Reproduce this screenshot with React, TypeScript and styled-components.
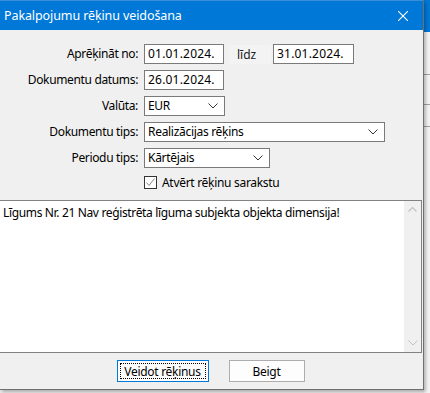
import styled, { createGlobalStyle } from "styled-components";

// global page styles
const GlobalStyle = createGlobalStyle`
  html, body {
    margin: 0;
    padding: 0;
    background: #e9e9e9;
  }
  body {
    font-family: "Noto Sans", "Open Sans", sans-serif;
    font-size: 12px;
    color: #000;
  }
`;

// desktop + window frame
const Desktop = styled.div`
  width: 430px;
  height: 393px;
  display: flex;
  overflow: hidden;
  background: #e9e9e9;
`;

const Window = styled.div`
  width: 424px;
  height: 390px;
  flex-shrink: 0;
  box-sizing: border-box;
  display: flex;
  flex-direction: column;
  background: #f0f0f0;
  border-right: 1px solid #6e6e6e;
  border-bottom: 1px solid #6e6e6e;
  box-shadow: 2px 2px 3px rgba(0, 0, 0, 0.25);
  position: relative;
  z-index: 1;
`;

const BackStrip = styled.div`
  flex: 1;
  display: flex;
  flex-direction: column;
  background: #f3f3f3;
`;

const BackTitle = styled.div`
  height: 32px;
  background: #0078d7;
`;

const BackLine = styled.div<{ $top: number }>`
  margin-top: ${(p) => p.$top}px;
  height: 1px;
  background: #a0a0a0;
`;

const TitleBar = styled.div`
  height: 30px;
  flex-shrink: 0;
  display: flex;
  align-items: center;
  justify-content: space-between;
  background: #0078d7;
  color: #fff;
  border-top: 1px solid #3b8fd8;
  box-sizing: border-box;
`;

const Title = styled.span`
  padding-left: 4px;
  font-size: 12.5px;
  letter-spacing: -0.1px;
`;

const CloseButton = styled.div`
  width: 40px;
  height: 29px;
  display: flex;
  align-items: center;
  justify-content: center;
`;

// form
const Form = styled.div`
  display: grid;
  grid-template-columns: 138px 1fr;
  column-gap: 6px;
  row-gap: 6px;
  padding-top: 14px;
`;

const Label = styled.div`
  text-align: right;
  height: 20px;
  line-height: 20px;
  letter-spacing: -0.35px;
  white-space: nowrap;
`;

const Row = styled.div`
  display: flex;
  align-items: center;
  height: 20px;
`;

const TextInput = styled.div<{ $width: number }>`
  width: ${(p) => p.$width}px;
  height: 20px;
  box-sizing: border-box;
  border: 1px solid #7a7a7a;
  background: #fff;
  padding-left: 3px;
  line-height: 18px;
  letter-spacing: 0.2px;
`;

const Select = styled(TextInput)`
  display: flex;
  align-items: center;
  justify-content: space-between;
  padding-right: 6px;
  letter-spacing: -0.3px;
`;

const InlineLabel = styled.div`
  margin-left: 5px;
  margin-right: 2px;
  width: 42px;
  height: 19px;
  line-height: 19px;
  padding-left: 8px;
  box-sizing: border-box;
  background: #f3f3f4;
  color: #222;
`;

const CheckRow = styled.div`
  grid-column: 2;
  display: flex;
  align-items: center;
  gap: 5px;
  margin-top: 2px;
  height: 13px;
  letter-spacing: -0.3px;
`;

const CheckBox = styled.div`
  width: 13px;
  height: 13px;
  box-sizing: border-box;
  border: 1px solid #333;
  background: #fff;
  display: flex;
  align-items: center;
  justify-content: center;
`;

// message area
const Messages = styled.div`
  margin-top: 11px;
  width: 422px;
  height: 153px;
  flex-shrink: 0;
  box-sizing: border-box;
  border: 1px solid #828282;
  border-left: none;
  background: #fff;
  display: flex;
`;

const MessageText = styled.div`
  flex: 1;
  padding: 3px 0 0 3px;
  letter-spacing: -0.35px;
`;

const ScrollBar = styled.div`
  width: 17px;
  background: #f0f0f0;
  display: flex;
  flex-direction: column;
  justify-content: space-between;
  align-items: center;
  padding: 6px 0;
`;

// buttons
const ButtonBar = styled.div`
  flex: 1;
  display: flex;
  justify-content: center;
  gap: 20px;
  padding-top: 7px;
  padding-right: 2px;
`;

const Button = styled.div<{ $width: number; $focused?: boolean }>`
  width: ${(p) => p.$width}px;
  height: 22px;
  box-sizing: border-box;
  border: 1px solid ${(p) => (p.$focused ? "#0078d7" : "#adadad")};
  background: #fdfdfd;
  display: flex;
  padding: 2px;
  letter-spacing: -0.3px;
`;

const ButtonInner = styled.div<{ $focused?: boolean }>`
  flex: 1;
  display: flex;
  align-items: center;
  justify-content: center;
  border: 1px dotted ${(p) => (p.$focused ? "#000" : "transparent")};
`;

const Chevron = ({ color = "#333" }: { color?: string }) => (
  <svg width="10" height="6" viewBox="0 0 10 6">
    <path d="M0.5 0.5 L5 5 L9.5 0.5" fill="none" stroke={color} strokeWidth="1" />
  </svg>
);

const UpChevron = () => (
  <svg width="9" height="5" viewBox="0 0 9 5">
    <path d="M0.5 4.5 L4.5 0.5 L8.5 4.5" fill="none" stroke="#c2c2c2" strokeWidth="1.2" />
  </svg>
);

export default function App() {
  return (
    <>
      <GlobalStyle />
      <Desktop>
        <Window>
          <TitleBar>
            <Title>Pakalpojumu rēķinu veidošana</Title>
            <CloseButton>
              <svg width="10" height="10" viewBox="0 0 10 10">
                <path d="M0 0 L10 10 M10 0 L0 10" stroke="#fff" strokeWidth="1.1" />
              </svg>
            </CloseButton>
          </TitleBar>

          <Form>
            <Label>Aprēķināt no:</Label>
            <Row>
              <TextInput $width={80}>01.01.2024.</TextInput>
              <InlineLabel>līdz</InlineLabel>
              <TextInput $width={81}>31.01.2024.</TextInput>
            </Row>

            <Label>Dokumentu datums:</Label>
            <Row>
              <TextInput $width={80}>26.01.2024.</TextInput>
            </Row>

            <Label>Valūta:</Label>
            <Row>
              <Select $width={81}>
                EUR
                <Chevron />
              </Select>
            </Row>

            <Label>Dokumentu tips:</Label>
            <Row>
              <Select $width={241}>
                Realizācijas rēķins
                <Chevron />
              </Select>
            </Row>

            <Label>Periodu tips:</Label>
            <Row>
              <Select $width={126}>
                Kārtējais
                <Chevron />
              </Select>
            </Row>

            <CheckRow>
              <CheckBox>
                <svg width="11" height="11" viewBox="0 0 11 11">
                  <path d="M1.5 5.5 L4 8.5 L9.5 1.5" fill="none" stroke="#8a8a8a" strokeWidth="1" />
                </svg>
              </CheckBox>
              Atvērt rēķinu sarakstu
            </CheckRow>
          </Form>

          <Messages>
            <MessageText>Līgums Nr. 21 Nav reģistrēta līguma subjekta objekta dimensija!</MessageText>
            <ScrollBar>
              <UpChevron />
              <Chevron color="#c2c2c2" />
            </ScrollBar>
          </Messages>

          <ButtonBar>
            <Button $width={92} $focused>
              <ButtonInner $focused>Veidot rēķinus</ButtonInner>
            </Button>
            <Button $width={76}>
              <ButtonInner>Beigt</ButtonInner>
            </Button>
          </ButtonBar>
        </Window>

        <BackStrip>
          <BackTitle />
          <BackLine $top={42} />
          <BackLine $top={29} />
          <BackLine $top={21} />
        </BackStrip>
      </Desktop>
    </>
  );
}
